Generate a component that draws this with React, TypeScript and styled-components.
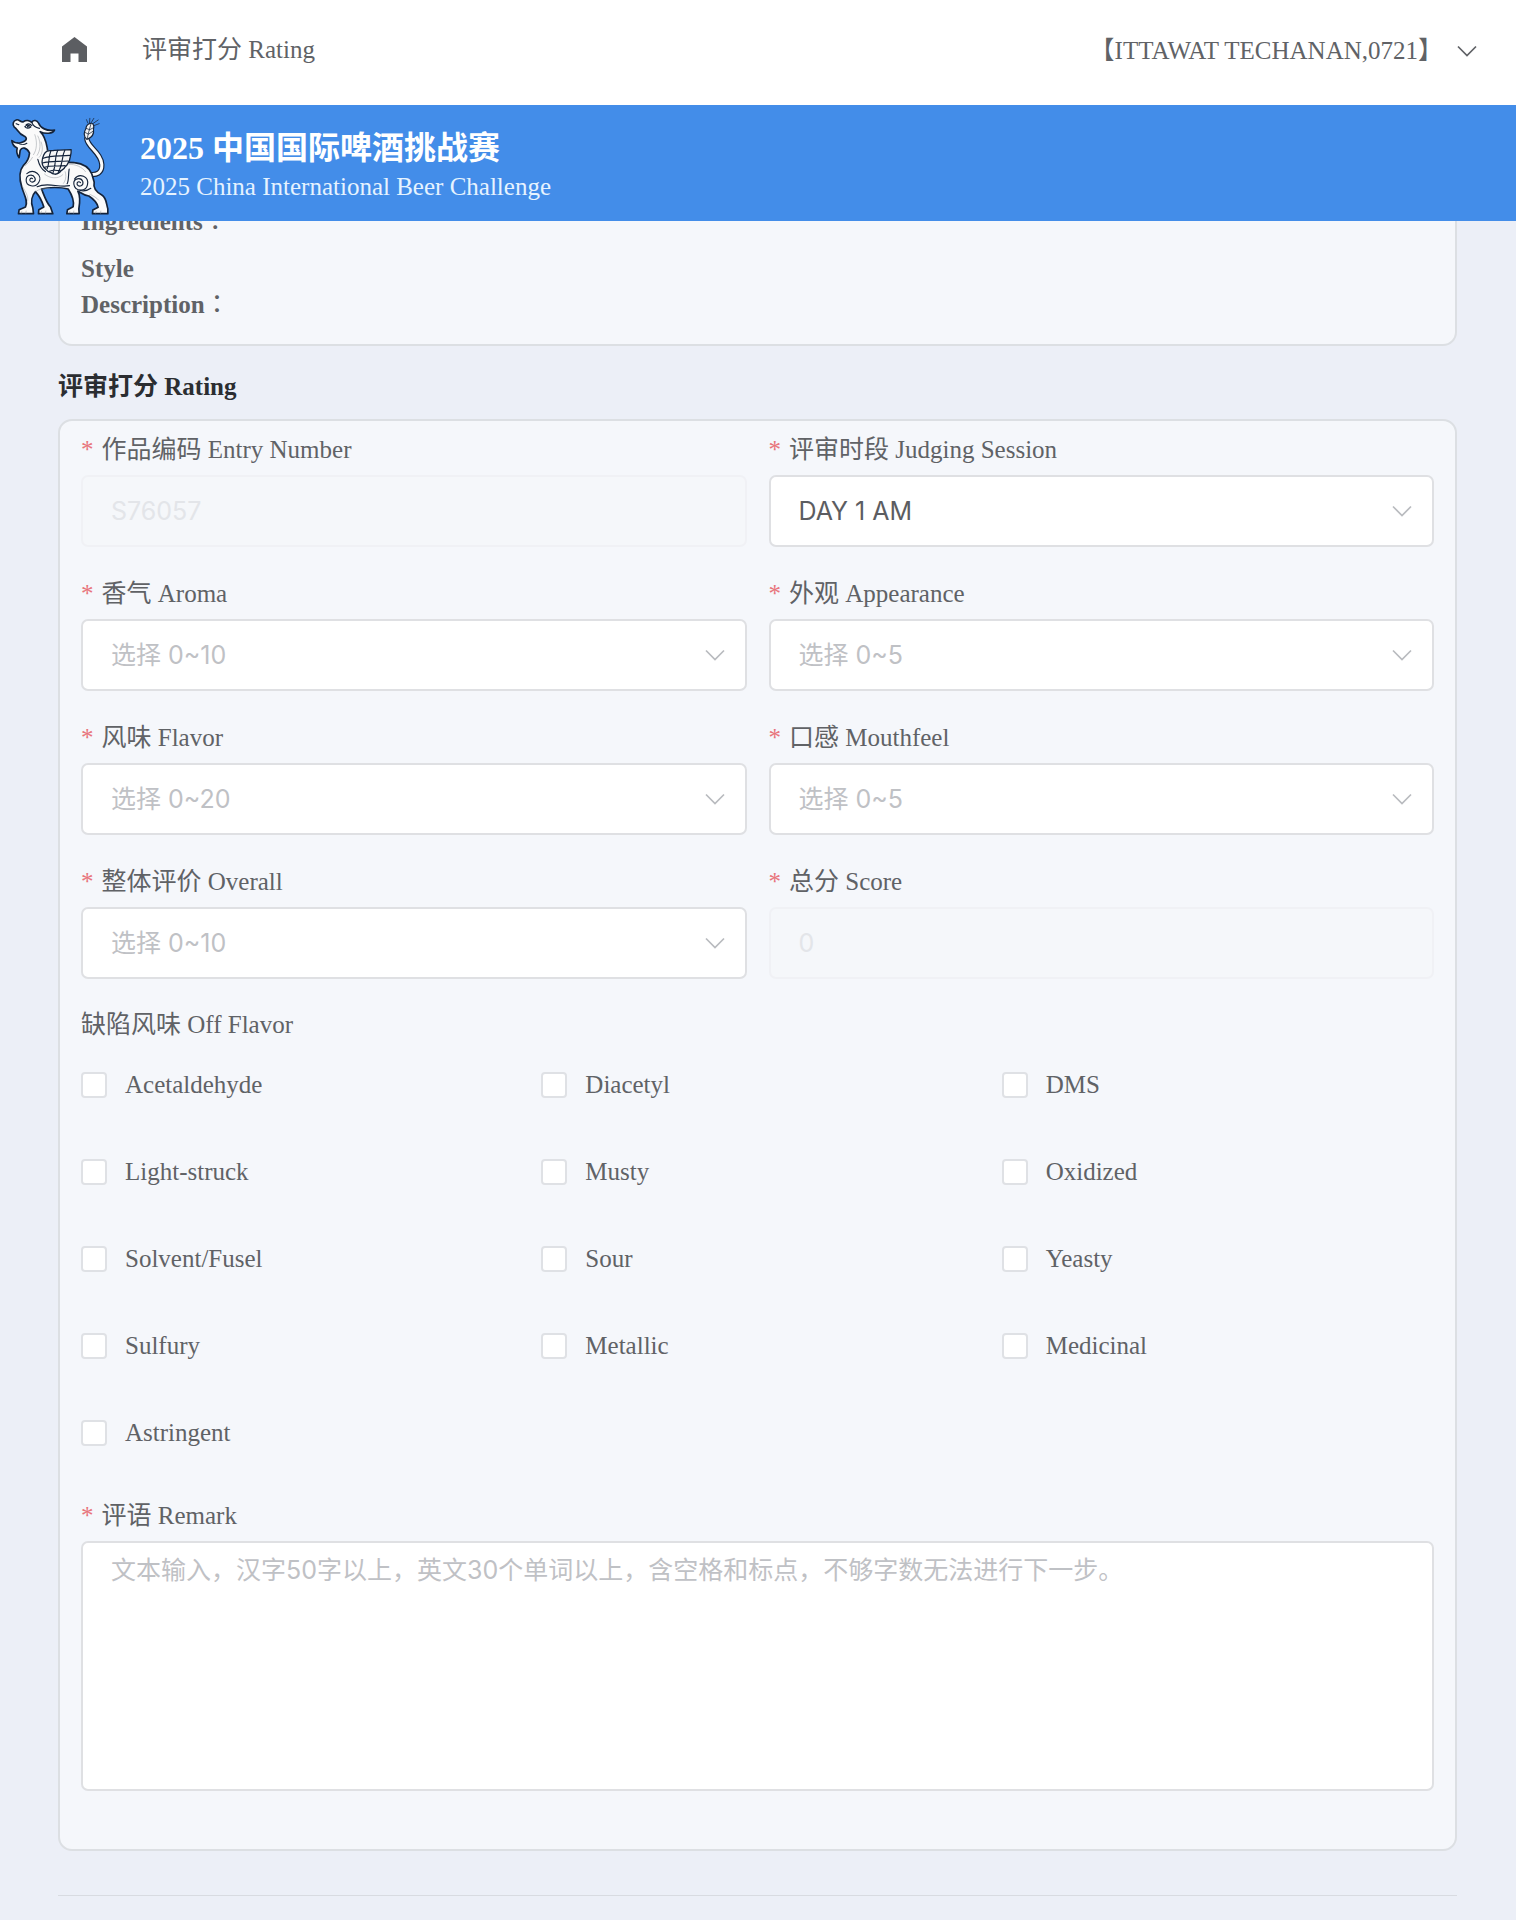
import React, { useState } from "react";
import styled, { createGlobalStyle } from "styled-components";

const serif = `"Liberation Serif", "Times New Roman", "Noto Sans CJK SC", serif`;
const sans = `Inter, "Noto Sans CJK SC", sans-serif`;

const GlobalStyle = createGlobalStyle`
  *, *::before, *::after { box-sizing: border-box; }
  body {
    margin: 0;
    background: #eceff7;
    color: #606266;
    font: 25px/36px ${serif};
  }
`;

const Header = styled.header`
  position: sticky;
  top: 0;
  z-index: 10;
`;

const TopBar = styled.nav`
  display: flex;
  align-items: center;
  height: 105px;
  padding: 0 39px 6px 60px;
  background: #fff;
`;

const HomeLink = styled.a`
  display: flex;
  color: #5c5e62;
`;

const PageName = styled.span`
  margin-left: 52px;
`;

const UserButton = styled.button`
  display: flex;
  align-items: center;
  gap: 14px;
  margin-left: auto;
  padding: 2px 0 0;
  border: 0;
  background: none;
  color: inherit;
  font: inherit;
`;

const Banner = styled.div`
  display: flex;
  align-items: center;
  gap: 26px;
  height: 116px;
  padding: 6px 7px 0;
  background: #438de9;
  color: #fff;
`;

const BannerTitle = styled.h1`
  margin: 0;
  font-size: 32px;
  line-height: 42px;
`;

const BannerSubtitle = styled.p`
  margin: 0;
  line-height: 36px;
  color: #e6f3ff;
`;

const Main = styled.main`
  margin-top: -25px;
  padding: 0 59px 24px 58px;
`;

const Card = styled.section`
  padding: 6px 21px 21px;
  border: 2px solid #dcdfe3;
  border-radius: 14px;
  background: #f5f7fb;
`;

const RatingCard = styled(Card)`
  padding: 9px 21px 58px;
`;

const Detail = styled.div`
  width: 160px;
  font-weight: 700;

  & + & {
    margin-top: 11px;
  }
`;

const Colon = styled.span`
  font-family: "Noto Sans CJK TC", sans-serif;
  font-weight: 400;
  line-height: 1;
`;

const SectionTitle = styled.h2`
  margin: 21px 0 12px;
  color: #2b2d31;
  font-size: 25px;
  line-height: 40px;
`;

const FieldGrid = styled.div`
  display: grid;
  grid-template-columns: 1fr 1fr;
  gap: 27px 22px;
`;

const Field = styled.div`
  display: flex;
  flex-direction: column;
  gap: 5px;
  min-width: 0;
`;

const Label = styled.label`
  line-height: 40px;
`;

const Required = styled.span`
  margin-right: 8px;
  color: #e8747c;
`;

const SelectBox = styled.div`
  position: relative;
  display: grid;
`;

const SelectIcon = styled.span`
  position: absolute;
  top: 0;
  bottom: 0;
  right: 22px;
  display: flex;
  align-items: center;
  color: #b9bbbf;
  pointer-events: none;
`;

const Select = styled.select<{ $empty: boolean }>`
  appearance: none;
  width: 100%;
  height: 72px;
  padding: 0 60px 0 28px;
  border: 2px solid #dfe0e3;
  border-radius: 7px;
  background: #fff;
  color: ${(p) => (p.$empty ? "#bfc1c5" : "#5c5d61")};
  font: 25px/36px ${sans};
`;

const DisabledInput = styled.input`
  width: 100%;
  height: 72px;
  padding: 0 28px;
  border: 2px solid #f0f1f5;
  border-radius: 7px;
  background: #f5f7fa;
  color: #e3e5e9;
  font: 25px/36px ${sans};
`;

const FlavorGroup = styled.fieldset`
  min-width: 0;
  margin: 26px 0 45px;
  padding: 0;
  border: 0;
`;

const Legend = styled.legend`
  padding: 0;
  line-height: 40px;
`;

const FlavorGrid = styled.div`
  display: grid;
  grid-template-columns: repeat(3, 1fr);
  gap: 51px 28px;
  padding-top: 22px;
`;

const FlavorOption = styled.label`
  display: flex;
  align-items: center;
  gap: 18px;
`;

const CheckBox = styled.input`
  appearance: none;
  width: 26px;
  height: 26px;
  margin: 0;
  border: 2px solid #dfe1e5;
  border-radius: 4px;
  background: #fff;

  &:checked {
    border-color: #438de9;
    background: #438de9;
  }
`;

const Remark = styled.textarea`
  display: block;
  width: 100%;
  height: 250px;
  padding: 9px 28px;
  border: 2px solid #dfe0e3;
  border-radius: 7px;
  background: #fff;
  color: #5c5d61;
  font: 25px/36px ${sans};
  resize: none;

  &::placeholder {
    color: #bfc1c5;
    opacity: 1;
  }
`;

const Divider = styled.hr`
  height: 1px;
  margin: 44px 0 0;
  border: 0;
  background: #d8dbe1;
`;

function HomeIcon() {
  return (
    <svg width="30" height="30" viewBox="0 0 30 30" fill="currentColor" aria-hidden="true">
      <path d="M14.5 2 27 11.6V27H18.5V18.5H10.5V27H2V11.6Z" />
    </svg>
  );
}

function Chevron() {
  return (
    <svg width="20" height="12" viewBox="0 0 20 12" fill="none" stroke="currentColor" strokeWidth="1.7" aria-hidden="true">
      <path d="M1 1.5 10 10.5 19 1.5" />
    </svg>
  );
}

function BeastLogo() {
  return (
    <svg width="107" height="102" viewBox="20 44 320 306" strokeLinecap="round" strokeLinejoin="round" aria-hidden="true">
      <g fill="none">
        <path d="M259 116C263 142 302 157 304 193C305 218 288 225 268 222" stroke="#14233a" strokeWidth="16" />
        <path d="M259 116C263 142 302 157 304 193C305 218 288 225 268 222" stroke="#fafafa" strokeWidth="9" />
      </g>
      <path
        d="M41 80C35 73 38 61 47 59C55 55 60 67 69 64C77 58 88 61 94 66C99 57 110 60 114 68C120 83 138 93 162 89C158 101 133 101 119 94C131 105 136 120 140 142L147 188C160 190 195 183 222 187C248 190 266 201 274 221L281 245C278 260 285 274 304 284C319 293 317 311 322 325L322 340H276L277 329L293 321C289 304 279 296 265 287C251 286 242 277 232 272C241 289 238 309 235 326L236 340H199L201 328L218 319C222 300 214 283 203 266C181 260 144 260 123 266C130 282 136 305 150 320L157 340H114L115 328L130 320C125 303 118 289 105 274C94 285 90 304 97 323L99 340H54L56 328L75 320C84 301 70 283 64 261C56 236 56 211 69 195C80 185 86 172 87 158C79 142 65 138 59 150L56 172C49 163 47 155 50 143C43 140 35 131 34 121C43 129 57 130 67 125C81 119 80 111 69 106C55 102 51 85 41 80Z"
        fill="#fafafa"
        stroke="#14233a"
        strokeWidth="5"
      />
      <g fill="none" stroke="#14233a" strokeWidth="3.4">
        <path d="M73 79C79 72 87 75 91 80C84 85 77 84 73 79M77 73C83 69 89 70 94 76M94 66C97 76 107 82 117 84M47 70l8 3M51 127C61 135 73 133 79 129" />
        <circle cx="82" cy="79" r="3" fill="#14233a" stroke="none" />
        <path d="M79 220C101 202 127 226 115 246C105 264 76 258 77 238C78 223 97 220 103 232C108 242 96 250 89 242C86 237 91 231 96 235" />
        <path d="M222 236C237 216 266 229 261 253C257 275 223 275 220 251C218 233 242 230 247 244C250 256 236 262 230 253C228 246 235 241 240 247" />
        <path d="M110 259C142 244 174 263 207 256M238 270C254 275 264 269 271 264M112 177C116 194 122 207 135 214M206 206C203 224 205 243 200 250" />
        <g strokeWidth="1.4" stroke="#8b9097">
          <path d="M103 103C111 125 109 149 99 163M112 107C123 129 119 151 110 165M122 125C129 146 125 162 116 171M96 171C89 183 81 189 74 196M205 192C225 191 245 200 255 214M194 214C198 228 196 240 189 249M105 274C116 265 135 264 147 265M268 282C278 287 288 291 294 299M67 260C76 276 83 286 82 300M132 221C146 235 174 237 187 223" />
          <path d="M64 333l-2 6M77 332l-1 7M123 333l-2 6M136 332l-1 7M208 333l-2 6M220 332l-1 7M287 333l-2 6M301 332l-1 7" />
        </g>
      </g>
      <path
        d="M130 163C138 145 151 153 161 150L212 148C213 160 209 169 207 180C202 186 202 195 194 199C189 210 182 207 178 216C169 224 157 223 150 216C139 214 137 206 130 201C122 190 125 174 130 163Z"
        fill="#f7f7f7"
        stroke="#14233a"
        strokeWidth="4"
      />
      <path
        d="M128 174C149 165 175 168 209 165M126 188C147 180 174 185 203 182M132 201C153 194 171 199 194 196M147 213C159 207 171 210 180 212M151 152C143 171 148 185 140 205M172 150C161 171 169 188 157 219M193 150C182 171 190 187 173 217"
        fill="none"
        stroke="#14233a"
        strokeWidth="3.4"
      />
      <path
        d="M259 117C248 108 250 94 256 86C257 76 263 70 270 69C280 67 281 79 279 86C281 99 275 112 259 117Z"
        fill="#f3f3f3"
        stroke="#14233a"
        strokeWidth="3.5"
      />
      <path
        d="M260 115C263 102 266 87 271 72M253 96l10 5M277 93l-12 8M257 84l10 4M279 82l-11 6M262 68l-4-10M267 67l1-13M272 67l8-13M277 70l16-11M280 76l16-6"
        fill="none"
        stroke="#14233a"
        strokeWidth="2.2"
      />
    </svg>
  );
}

type SelectField = { kind: "select"; id: string; label: string; placeholder?: string; options: string[] };
type FixedField = { kind: "fixed"; id: string; label: string; value: string };

const scale = (max: number) => Array.from({ length: max + 1 }, (_, i) => String(i));

const fields: (SelectField | FixedField)[] = [
  { kind: "fixed", id: "entry", label: "作品编码 Entry Number", value: "S76057" },
  { kind: "select", id: "session", label: "评审时段 Judging Session", options: ["DAY 1 AM"] },
  { kind: "select", id: "aroma", label: "香气 Aroma", placeholder: "选择 0~10", options: scale(10) },
  { kind: "select", id: "appearance", label: "外观 Appearance", placeholder: "选择 0~5", options: scale(5) },
  { kind: "select", id: "flavor", label: "风味 Flavor", placeholder: "选择 0~20", options: scale(20) },
  { kind: "select", id: "mouthfeel", label: "口感 Mouthfeel", placeholder: "选择 0~5", options: scale(5) },
  { kind: "select", id: "overall", label: "整体评价 Overall", placeholder: "选择 0~10", options: scale(10) },
  { kind: "fixed", id: "score", label: "总分 Score", value: "0" },
];

const offFlavors = [
  "Acetaldehyde", "Diacetyl", "DMS",
  "Light-struck", "Musty", "Oxidized",
  "Solvent/Fusel", "Sour", "Yeasty",
  "Sulfury", "Metallic", "Medicinal",
  "Astringent",
];

function RequiredLabel({ htmlFor, children }: { htmlFor: string; children: React.ReactNode }) {
  return (
    <Label htmlFor={htmlFor}>
      <Required>*</Required>
      {children}
    </Label>
  );
}

function SelectControl({ field }: { field: SelectField }) {
  const [value, setValue] = useState(field.placeholder ? "" : field.options[0]);
  return (
    <SelectBox>
      <Select id={field.id} value={value} $empty={value === ""} onChange={(e) => setValue(e.target.value)}>
        {field.placeholder && <option value="">{field.placeholder}</option>}
        {field.options.map((o) => (
          <option key={o} value={o}>{o}</option>
        ))}
      </Select>
      <SelectIcon><Chevron /></SelectIcon>
    </SelectBox>
  );
}

export default function App() {
  return (
    <>
      <GlobalStyle />
      <Header>
        <TopBar>
          <HomeLink href="#" aria-label="Home"><HomeIcon /></HomeLink>
          <PageName>评审打分 Rating</PageName>
          <UserButton type="button">
            【ITTAWAT TECHANAN,0721】
            <Chevron />
          </UserButton>
        </TopBar>
        <Banner>
          <BeastLogo />
          <div>
            <BannerTitle>2025 中国国际啤酒挑战赛</BannerTitle>
            <BannerSubtitle>2025 China International Beer Challenge</BannerSubtitle>
          </div>
        </Banner>
      </Header>
      <Main>
        <Card>
          <Detail>Ingredients<Colon>：</Colon></Detail>
          <Detail>Style Description<Colon>：</Colon></Detail>
        </Card>
        <SectionTitle>评审打分 Rating</SectionTitle>
        <RatingCard>
          <FieldGrid>
            {fields.map((f) => (
              <Field key={f.id}>
                <RequiredLabel htmlFor={f.id}>{f.label}</RequiredLabel>
                {f.kind === "select" ? (
                  <SelectControl field={f} />
                ) : (
                  <DisabledInput id={f.id} value={f.value} disabled />
                )}
              </Field>
            ))}
          </FieldGrid>
          <FlavorGroup>
            <Legend>缺陷风味 Off Flavor</Legend>
            <FlavorGrid>
              {offFlavors.map((name) => (
                <FlavorOption key={name}>
                  <CheckBox type="checkbox" />
                  {name}
                </FlavorOption>
              ))}
            </FlavorGrid>
          </FlavorGroup>
          <Field>
            <RequiredLabel htmlFor="remark">评语 Remark</RequiredLabel>
            <Remark
              id="remark"
              placeholder="文本输入，汉字50字以上，英文30个单词以上，含空格和标点，不够字数无法进行下一步。"
            />
          </Field>
        </RatingCard>
        <Divider />
      </Main>
    </>
  );
}
